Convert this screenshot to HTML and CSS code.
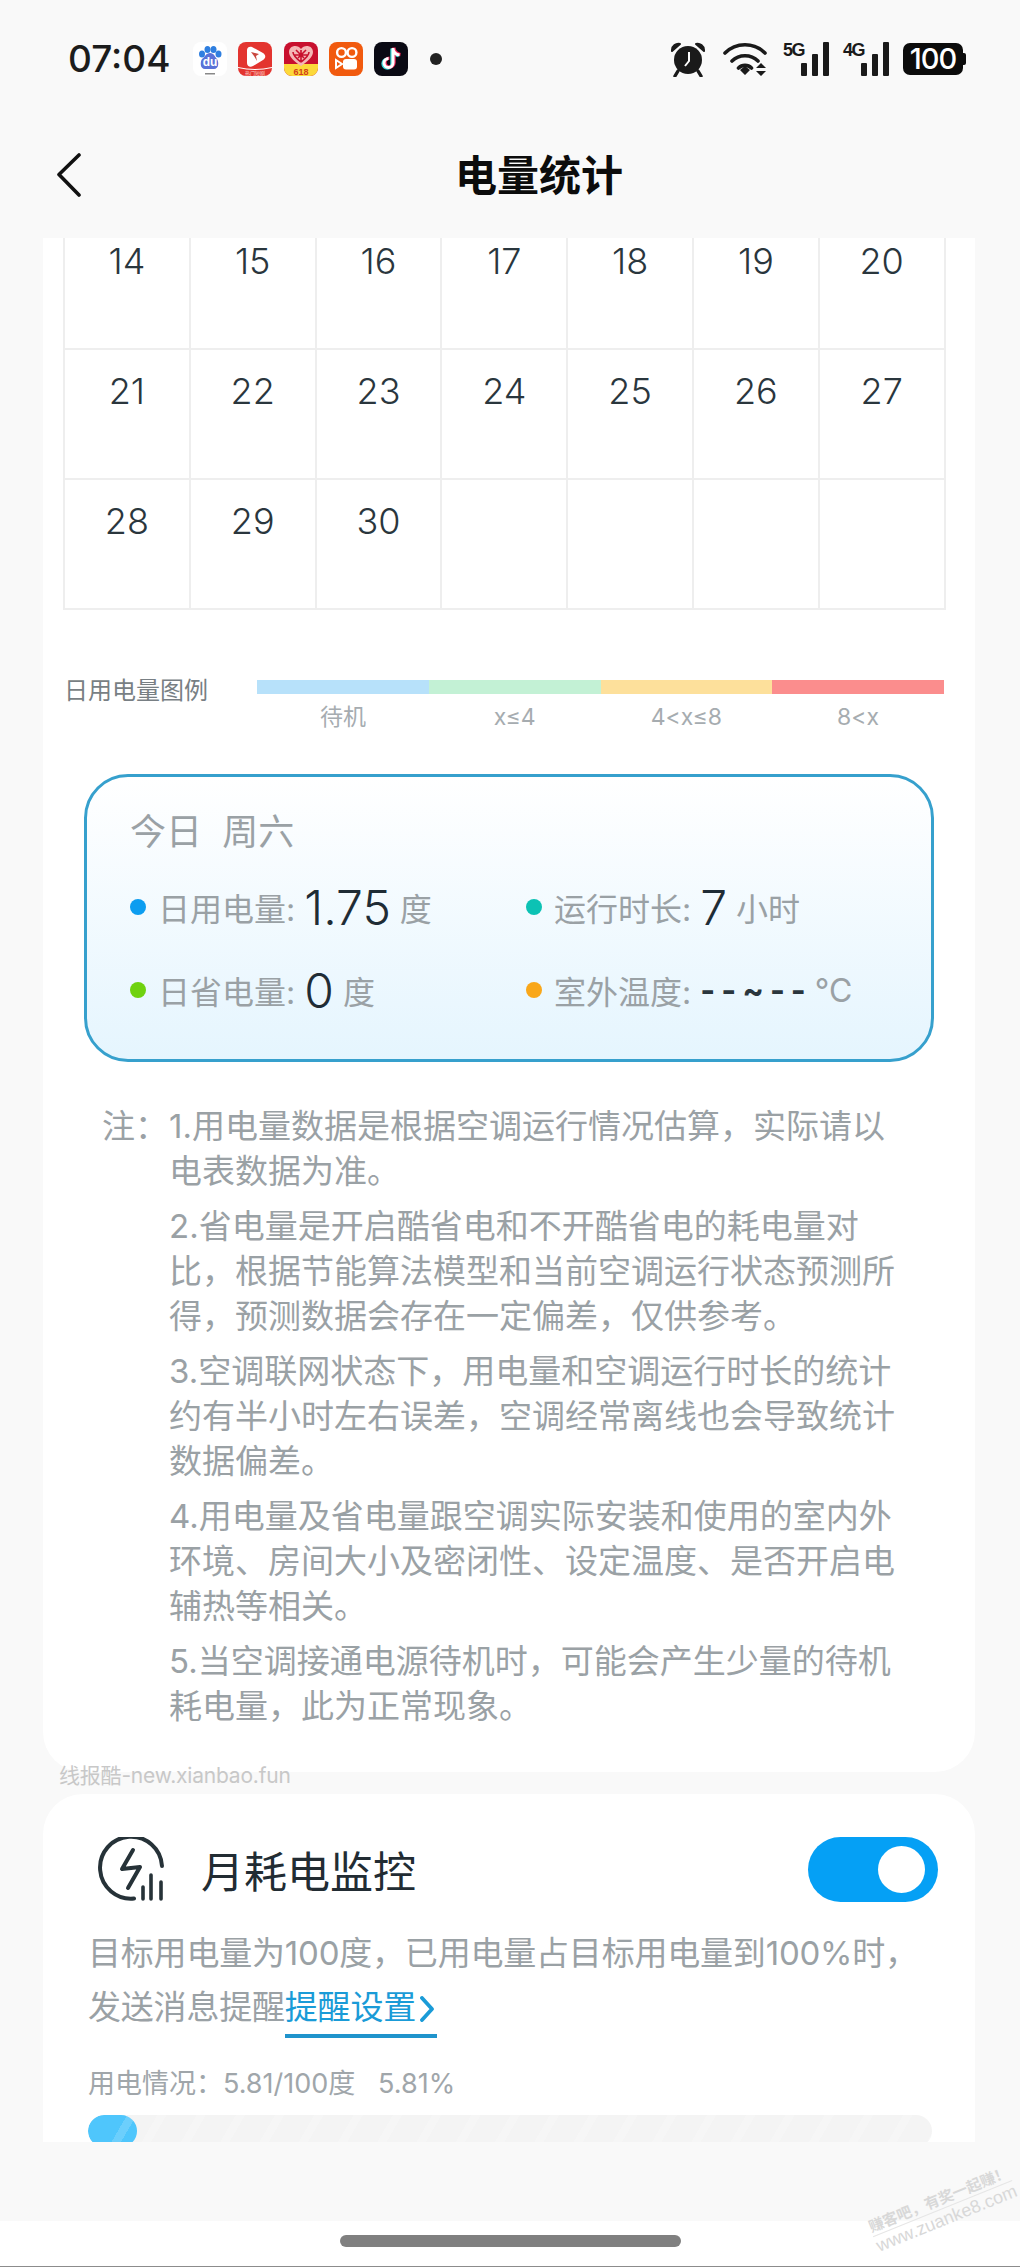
FILE: index.html
```html
<!DOCTYPE html>
<html lang="zh-CN">
<head>
    <meta charset="UTF-8">
    <meta name="viewport" content="width=device-width, initial-scale=1.0">
    <title>电量统计</title>
    <link rel="stylesheet" href="styles.css">
</head>
<body>

    <!-- Status bar -->
    <div class="status-bar">
        <div class="status-left">
            <span class="time">07:04</span>
            <div class="app-icons">
                <svg class="app-icon" viewBox="0 0 34 34">
                    <rect width="34" height="34" rx="8" fill="#fff"/>
                    <ellipse cx="9" cy="12" rx="3" ry="3.6" fill="#2f7fe0"/>
                    <ellipse cx="14.5" cy="7.5" rx="3" ry="3.6" fill="#2f7fe0"/>
                    <ellipse cx="20.5" cy="7.5" rx="3" ry="3.6" fill="#2f7fe0"/>
                    <ellipse cx="25.5" cy="12" rx="3" ry="3.6" fill="#2f7fe0"/>
                    <path d="M17 11c4 0 5 4 7 6 2 3 2 10-3 10H12c-5 0-5-7-3-10 3-2 4-6 8-6z" fill="#5a72d8"/>
                    <text x="17" y="24" class="du-text">du</text>
                    <rect x="12" y="31" width="10" height="1.5" fill="#888"/>
                </svg>
                <svg class="app-icon" viewBox="0 0 34 34">
                    <rect width="34" height="34" rx="8" fill="#e3342f"/>
                    <path d="M0 25q17 4 34 0v1q-17 4-34 0z" fill="#fff"/>
                    <path d="M9 8c0-3 3-4 5-3l11 6c3 2 3 5 0 7l-10 6c-3 2-6 0-6-3z" fill="#fff"/>
                    <path d="M13 10l8 2-3 2 1 5-3-5z" fill="#c9463e"/>
                    <text x="17" y="32.5" class="tiny-text">热门短剧</text>
                </svg>
                <svg class="app-icon" viewBox="0 0 34 34">
                    <rect width="34" height="34" rx="8" fill="#c8102e"/>
                    <path d="M0 22h34v4a8 8 0 0 1-8 8H8a8 8 0 0 1-8-8z" fill="#fcd93a"/>
                    <path d="M17 24C10 19 5 15 5 10c0-7 9-8 12-3 3-5 12-4 12 3 0 5-5 9-12 14z" fill="#f4b6b6"/>
                    <path d="M17 20c-4-3-8-6-8-10M17 8v12M25 10c0 4-4 7-8 10M10 13h14M12 8l8 8M22 8l-8 8" stroke="#c8102e" stroke-width="1.6" fill="none"/>
                    <text x="17" y="32.5" class="mall-text">618</text>
                </svg>
                <svg class="app-icon" viewBox="0 0 34 34">
                    <rect width="34" height="34" rx="8" fill="#f15a0e"/>
                    <circle cx="12.5" cy="10.5" r="4.4" fill="none" stroke="#fff" stroke-width="2.4"/>
                    <circle cx="23" cy="10.5" r="4.4" fill="none" stroke="#fff" stroke-width="2.4"/>
                    <rect x="14" y="17" width="14" height="10.500" rx="3" fill="#fff"/>
                    <path d="M7 18l6 4-6 4z" fill="none" stroke="#fff" stroke-width="2"/>
                </svg>
                <svg class="app-icon" viewBox="0 0 34 34">
                    <rect width="34" height="34" rx="8" fill="#0a0a14"/>
                    <path d="M19 6v15a4.5 4.5 0 1 1-4.500-4.500M19 7c.5 3.500 3 5.500 6.500 6" fill="none" stroke="#35d6d8" stroke-width="3.400" transform="translate(-1 .6)"/>
                    <path d="M19 6v15a4.500 4.500 0 1 1-4.500-4.500M19 7c.5 3.500 3 5.500 6.500 6" fill="none" stroke="#f2285a" stroke-width="3.400" transform="translate(1 -.4)"/>
                    <path d="M19 6v15a4.500 4.500 0 1 1-4.500-4.500M19 7c.5 3.500 3 5.500 6.500 6" fill="none" stroke="#fff" stroke-width="3"/>
                </svg>
            </div>
            <span class="more-dot"></span>
        </div>
        <div class="status-right">
            <svg class="alarm" viewBox="0 0 36 36">
                <path d="M2 9c0-4 4-7 8-6L2 10zM34 9c0-4-4-7-8-6l8 7z" fill="#1a1a1a" stroke="#1a1a1a" stroke-width="2" stroke-linejoin="round"/>
                <circle cx="18" cy="19" r="14" fill="#1a1a1a"/>
                <path d="M8 30l-3 5M28 30l3 5" stroke="#1a1a1a" stroke-width="3.400" stroke-linecap="round"/>
                <path d="M19 11v9l-4 5" fill="none" stroke="#fff" stroke-width="2"/>
            </svg>
            <svg class="wifi" viewBox="0 0 48 36">
                <path d="M2 12c11-11 29-11 40 0M9 20c7-7 19-7 26 0M15.500 27c3.500-3.500 9.500-3.500 13 0" fill="none" stroke="#1a1a1a" stroke-width="3.600" stroke-linecap="round"/>
                <path d="M17 29l5-4 5 4-5 5zM38 22l5 5H33zM38 35l5-5H33z" fill="#1a1a1a"/>
            </svg>
            <div class="signal">
                <span class="net">5G</span>
                <i class="b1"></i><i class="b2"></i><i class="b3"></i>
            </div>
            <div class="signal">
                <span class="net">4G</span>
                <i class="b1"></i><i class="b2"></i><i class="b3"></i>
            </div>
            <div class="battery"><span>100</span></div>
        </div>
    </div>

    <!-- Title bar -->
    <div class="title-bar">
        <svg class="back" viewBox="0 0 26 44">
            <path d="M23 2L3 21.500 23 42" fill="none" stroke="#111" stroke-width="3.600" stroke-linecap="round" stroke-linejoin="round"/>
        </svg>
        <h1>电量统计</h1>
    </div>

    <!-- Scrolled content -->
    <div class="scroll">
        <div class="scroll-inner">
            <div class="card stats-card">
                <div class="calendar">
                    <div class="day">14</div><div class="day">15</div><div class="day">16</div><div class="day">17</div><div class="day">18</div><div class="day">19</div><div class="day">20</div>
                    <div class="day">21</div><div class="day">22</div><div class="day">23</div><div class="day">24</div><div class="day">25</div><div class="day">26</div><div class="day">27</div>
                    <div class="day">28</div><div class="day">29</div><div class="day">30</div><div class="day"></div><div class="day"></div><div class="day"></div><div class="day"></div>
                </div>

                <div class="legend">
                    <span class="legend-title">日用电量图例</span>
                    <div class="legend-scale">
                        <div class="legend-item"><i class="c-idle"></i><span>待机</span></div>
                        <div class="legend-item"><i class="c-low"></i><span>x≤4</span></div>
                        <div class="legend-item"><i class="c-mid"></i><span>4&lt;x≤8</span></div>
                        <div class="legend-item"><i class="c-high"></i><span>8&lt;x</span></div>
                    </div>
                </div>

                <div class="today">
                    <div class="today-title">今日&nbsp;&nbsp;周六</div>
                    <div class="today-grid">
                        <div class="stat"><i class="dot dot-blue"></i><span class="stat-label">日用电量:</span><span class="stat-value">1.75</span><span class="stat-unit">度</span></div>
                        <div class="stat"><i class="dot dot-teal"></i><span class="stat-label">运行时长:</span><span class="stat-value">7</span><span class="stat-unit">小时</span></div>
                        <div class="stat"><i class="dot dot-green"></i><span class="stat-label">日省电量:</span><span class="stat-value">0</span><span class="stat-unit">度</span></div>
                        <div class="stat"><i class="dot dot-orange"></i><span class="stat-label">室外温度:</span><span class="stat-temp">--~--</span><span class="stat-unit">℃</span></div>
                    </div>
                </div>

                <div class="notes">
                    <span class="notes-head">注：</span>
                    <div class="notes-body">
                        <p>1.用电量数据是根据空调运行情况估算，实际请以电表数据为准。</p>
                        <p>2.省电量是开启酷省电和不开酷省电的耗电量对比，根据节能算法模型和当前空调运行状态预测所得，预测数据会存在一定偏差，仅供参考。</p>
                        <p>3.空调联网状态下，用电量和空调运行时长的统计约有半小时左右误差，空调经常离线也会导致统计数据偏差。</p>
                        <p>4.用电量及省电量跟空调实际安装和使用的室内外环境、房间大小及密闭性、设定温度、是否开启电辅热等相关。</p>
                        <p>5.当空调接通电源待机时，可能会产生少量的待机耗电量，此为正常现象。</p>
                    </div>
                </div>
            </div>

            <div class="card monitor-card">
                <div class="monitor-head">
                    <svg class="monitor-icon" viewBox="0 0 68 64">
                        <path d="M37 61.500A31 31 0 1 1 65 29" fill="none" stroke="#263238" stroke-width="4" stroke-linecap="round"/>
                        <path d="M36 13L25 32l18-2L31 51" fill="none" stroke="#263238" stroke-width="4" stroke-linecap="round" stroke-linejoin="round"/>
                        <path d="M46 62V50M54 62V38M64 62V45" fill="none" stroke="#263238" stroke-width="3.600" stroke-linecap="round"/>
                    </svg>
                    <span class="monitor-title">月耗电监控</span>
                    <div class="toggle"><i></i></div>
                </div>
                <p class="monitor-desc">目标用电量为100度，已用电量占目标用电量到100%时，<br>发送消息提醒<span class="link">提醒设置<svg viewBox="0 0 14 26"><path d="M2 2l10 11L2 24" fill="none" stroke="#1a9bd7" stroke-width="3.800" stroke-linecap="round" stroke-linejoin="round"/></svg></span></p>
                <div class="usage">用电情况：5.81/100度&nbsp;&nbsp;&nbsp;5.81%</div>
                <div class="progress"><div class="progress-fill" style="width: 5.81%"></div></div>
            </div>
        </div>
    </div>

    <!-- Gesture bar -->
    <div class="nav-bar"><span class="handle"></span></div>

    <!-- Watermarks laid over the picture -->
    <span class="mark-source">线报酷-new.xianbao.fun</span>
    <div class="mark-site">
        <div class="mark-cn">赚客吧，有奖一起赚！</div>
        <div class="mark-en">www.zuanke8.com</div>
    </div>

</body>
</html>
```

FILE: styles.css
```css
* {
    box-sizing: border-box;
}

html, body {
    margin: 0;
    padding: 0;
}

body {
    position: relative;
    width: 1020px;
    height: 2267px;
    overflow: hidden;
    display: flex;
    flex-direction: column;
    background-color: #f9f9f9;
    font-family: Inter, "Noto Sans CJK SC", sans-serif;
    color: #9aa1a5;
}

p {
    margin: 0;
}

/* Status bar */
.status-bar {
    height: 118px;
    padding: 41px 57px 0 68px;
    display: flex;
    justify-content: space-between;
    align-items: flex-start;
}

.status-left,
.status-right {
    display: flex;
    align-items: center;
    height: 35px;
}

.time {
    width: 125px;
    font-family: Inter, sans-serif;
    font-size: 37px;
    font-weight: 500;
    color: #1c1c1c;
}

.app-icons {
    display: flex;
    gap: 11.300px;
}

.app-icon {
    width: 34px;
    height: 34px;
    display: block;
}

.du-text {
    font: bold 12px "Liberation Sans", sans-serif;
    fill: #fff;
    text-anchor: middle;
}

.tiny-text {
    font: 5px "Noto Sans CJK SC", sans-serif;
    fill: #ffd8d0;
    text-anchor: middle;
}

.mall-text {
    font: bold 9px "Liberation Sans", sans-serif;
    fill: #d2401a;
    text-anchor: middle;
}

.more-dot {
    width: 12px;
    height: 12px;
    margin-left: 22px;
    border-radius: 50%;
    background-color: #222;
}

.alarm {
    width: 36px;
    height: 36px;
    margin-right: 17px;
}

.wifi {
    width: 48px;
    height: 36px;
    margin-right: 12px;
}

.signal {
    position: relative;
    width: 46px;
    height: 34px;
    margin-right: 14px;
    display: flex;
    align-items: flex-end;
    justify-content: flex-end;
    gap: 5px;
}

.signal i {
    display: block;
    width: 6px;
    border-radius: 1px;
    background-color: #1a1a1a;
}

.signal .b1 { height: 13px; }
.signal .b2 { height: 22px; }
.signal .b3 { height: 34px; }

.net {
    position: absolute;
    left: 0;
    top: -2px;
    font-family: "Liberation Sans", sans-serif;
    font-size: 18px;
    font-weight: bold;
    letter-spacing: -1.500px;
    color: #1a1a1a;
}

.battery {
    position: relative;
    width: 60px;
    height: 32px;
    border-radius: 7px;
    background-color: #0c0c0c;
    display: flex;
    align-items: center;
    justify-content: center;
}

.battery::after {
    content: "";
    position: absolute;
    right: -3px;
    top: 10px;
    width: 3px;
    height: 12px;
    border-radius: 0 2px 2px 0;
    background-color: #0c0c0c;
}

.battery span {
    font-family: Inter, sans-serif;
    font-size: 29px;
    font-weight: 500;
    letter-spacing: -1px;
    color: #fff;
}

/* Title bar */
.title-bar {
    position: relative;
    height: 120px;
    flex: none;
    display: flex;
    align-items: flex-start;
    justify-content: center;
}

.title-bar h1 {
    margin: 26px 0 0 58px;
    font-family: "Noto Sans CJK SC", sans-serif;
    font-size: 42px;
    line-height: 58px;
    font-weight: bold;
    color: #0c0c0c;
}

.back {
    position: absolute;
    left: 56px;
    top: 35px;
    width: 26px;
    height: 44px;
}

/* Scroll area */
.scroll {
    height: 1904px;
    flex: none;
    overflow: hidden;
}

.scroll-inner {
    margin-top: -18px;
}

.card {
    margin: 0 45px 0 43px;
    background-color: #fff;
    border-radius: 40px;
}

.stats-card {
    height: 1552px;
    padding: 0 29px 0 20px;
    border-radius: 0 0 40px 40px;
}

/* Calendar */
.calendar {
    display: grid;
    grid-template-columns: repeat(7, 125.800px);
    border-left: 2px solid #eeeeee;
}

.day {
    height: 130px;
    padding-top: 18px;
    border-right: 2px solid #eeeeee;
    border-bottom: 2px solid #eeeeee;
    text-align: center;
    font-family: Inter, sans-serif;
    font-size: 36px;
    line-height: 46px;
    font-weight: 300;
    color: #2a363d;
}

/* Legend */
.legend {
    margin-top: 64px;
    display: flex;
    align-items: flex-start;
}

.legend-title {
    width: 193px;
    margin-left: 1px;
    font-size: 24px;
    line-height: 34px;
    color: #787f84;
}

.legend-scale {
    display: flex;
    width: 687px;
    margin-top: 6px;
}

.legend-item {
    flex: 1;
    text-align: center;
    font-size: 23px;
    line-height: 34px;
    color: #a6acb0;
}

.legend-item i {
    display: block;
    height: 14px;
    margin-bottom: 6px;
}

.c-idle { background-color: #b7e1fa; }
.c-low { background-color: #c3f1d5; }
.c-mid { background-color: #fde09b; }
.c-high { background-color: #fb8d8d; }

/* Today box */
.today {
    width: 850px;
    height: 288px;
    margin: 40px 0 0 21px;
    padding: 30px 0 0 43px;
    border: 3px solid #36a0cd;
    border-radius: 44px;
    background: linear-gradient(#fff, #e5f5fe);
}

.today-title {
    font-size: 36px;
    line-height: 50px;
}

.today-grid {
    margin-top: 20px;
    display: grid;
    grid-template-columns: 396px 1fr;
    row-gap: 23px;
}

.stat {
    height: 60px;
    display: flex;
    align-items: center;
    font-size: 32px;
}

.dot {
    width: 16px;
    height: 16px;
    margin: 0 12px 0 0;
    border-radius: 50%;
}

.dot-blue { background-color: #0c9df0; }
.dot-teal { background-color: #0cc2b4; }
.dot-green { background-color: #6fd20f; }
.dot-orange { background-color: #f9a71a; }

.stat-value {
    margin: 0 9px 0 9px;
    font-family: Inter, sans-serif;
    font-size: 48px;
    font-weight: 300;
    color: #1f2c35;
}

.stat-temp {
    margin: 0 3px 0 9px;
    font-family: Inter, sans-serif;
    font-size: 32px;
    font-weight: bold;
    letter-spacing: 6px;
    color: #2a363d;
}

/* Notes */
.notes {
    position: relative;
    margin-top: 42px;
    padding-left: 106px;
}

.notes-head {
    position: absolute;
    left: 39px;
    top: 0;
    font-size: 33px;
    line-height: 45px;
}

.notes-body {
    width: 734px;
    font-size: 33px;
    line-height: 45px;
}

.notes-body p {
    margin-bottom: 10px;
}

/* Monthly monitor card */
.monitor-card {
    position: relative;
    height: 400px;
    margin-top: 22px;
    padding: 42px 37px 0 45px;
}

.monitor-head {
    display: flex;
    align-items: center;
    height: 66px;
}

.monitor-icon {
    width: 68px;
    height: 64px;
    margin: 0 0 0 9px;
}

.monitor-title {
    margin-left: 36px;
    font-size: 43px;
    color: #222c33;
}

.toggle {
    width: 130px;
    height: 65px;
    margin-left: auto;
    padding: 9px 13px 0 0;
    border-radius: 33px;
    background-color: #05a0f5;
    display: flex;
    justify-content: flex-end;
}

.toggle i {
    display: block;
    width: 47px;
    height: 47px;
    border-radius: 50%;
    background-color: #fff;
}

.monitor-desc {
    width: 850px;
    margin-top: 24px;
    font-size: 33px;
    line-height: 54px;
    letter-spacing: -0.200px;
}

.link {
    display: inline-block;
    height: 56px;
    padding-right: 3px;
    border-bottom: 4px solid #2094cc;
    color: #1a9bd7;
    line-height: 50px;
}

.link svg {
    width: 14px;
    height: 26px;
    margin-left: 4px;
    vertical-align: -3px;
}

.usage {
    margin-top: 28px;
    font-size: 27px;
    line-height: 36px;
    color: #a0a6aa;
}

.progress {
    width: 844px;
    height: 32px;
    margin-top: 13px;
    border-radius: 16px;
    background: repeating-linear-gradient(120deg, #f4f4f4 0 26px, #f6f6f6 26px 34px);
    overflow: hidden;
}

.progress-fill {
    height: 100%;
    border-radius: 16px;
    background: linear-gradient(120deg, #4fc6fc 0 58%, #6ccffc 58% 72%, #4fc6fc 72%);
}

/* Gesture bar */
.nav-bar {
    height: 46px;
    margin-top: 79px;
    flex: none;
    display: flex;
    justify-content: center;
    padding-top: 14px;
    background-color: #fff;
    border-bottom: 1px solid #8c8c8c;
}

.handle {
    width: 341px;
    height: 12px;
    border-radius: 6px;
    background-color: #808080;
}

/* Watermarks */
.mark-source {
    position: absolute;
    left: 59px;
    top: 1762px;
    font-size: 21px;
    line-height: 28px;
    letter-spacing: -0.200px;
    color: #c8c8c8;
}

.mark-site {
    position: absolute;
    left: 868px;
    top: 2190px;
    width: 150px;
    transform: rotate(-22deg);
    text-align: center;
    color: #d8d8d8;
}

.mark-cn {
    font-size: 15px;
    line-height: 18px;
    font-weight: bold;
    white-space: nowrap;
    border-bottom: 1px solid #e6e6e6;
}

.mark-en {
    font-family: "Liberation Sans", sans-serif;
    font-size: 18px;
    line-height: 20px;
    white-space: nowrap;
}
```
